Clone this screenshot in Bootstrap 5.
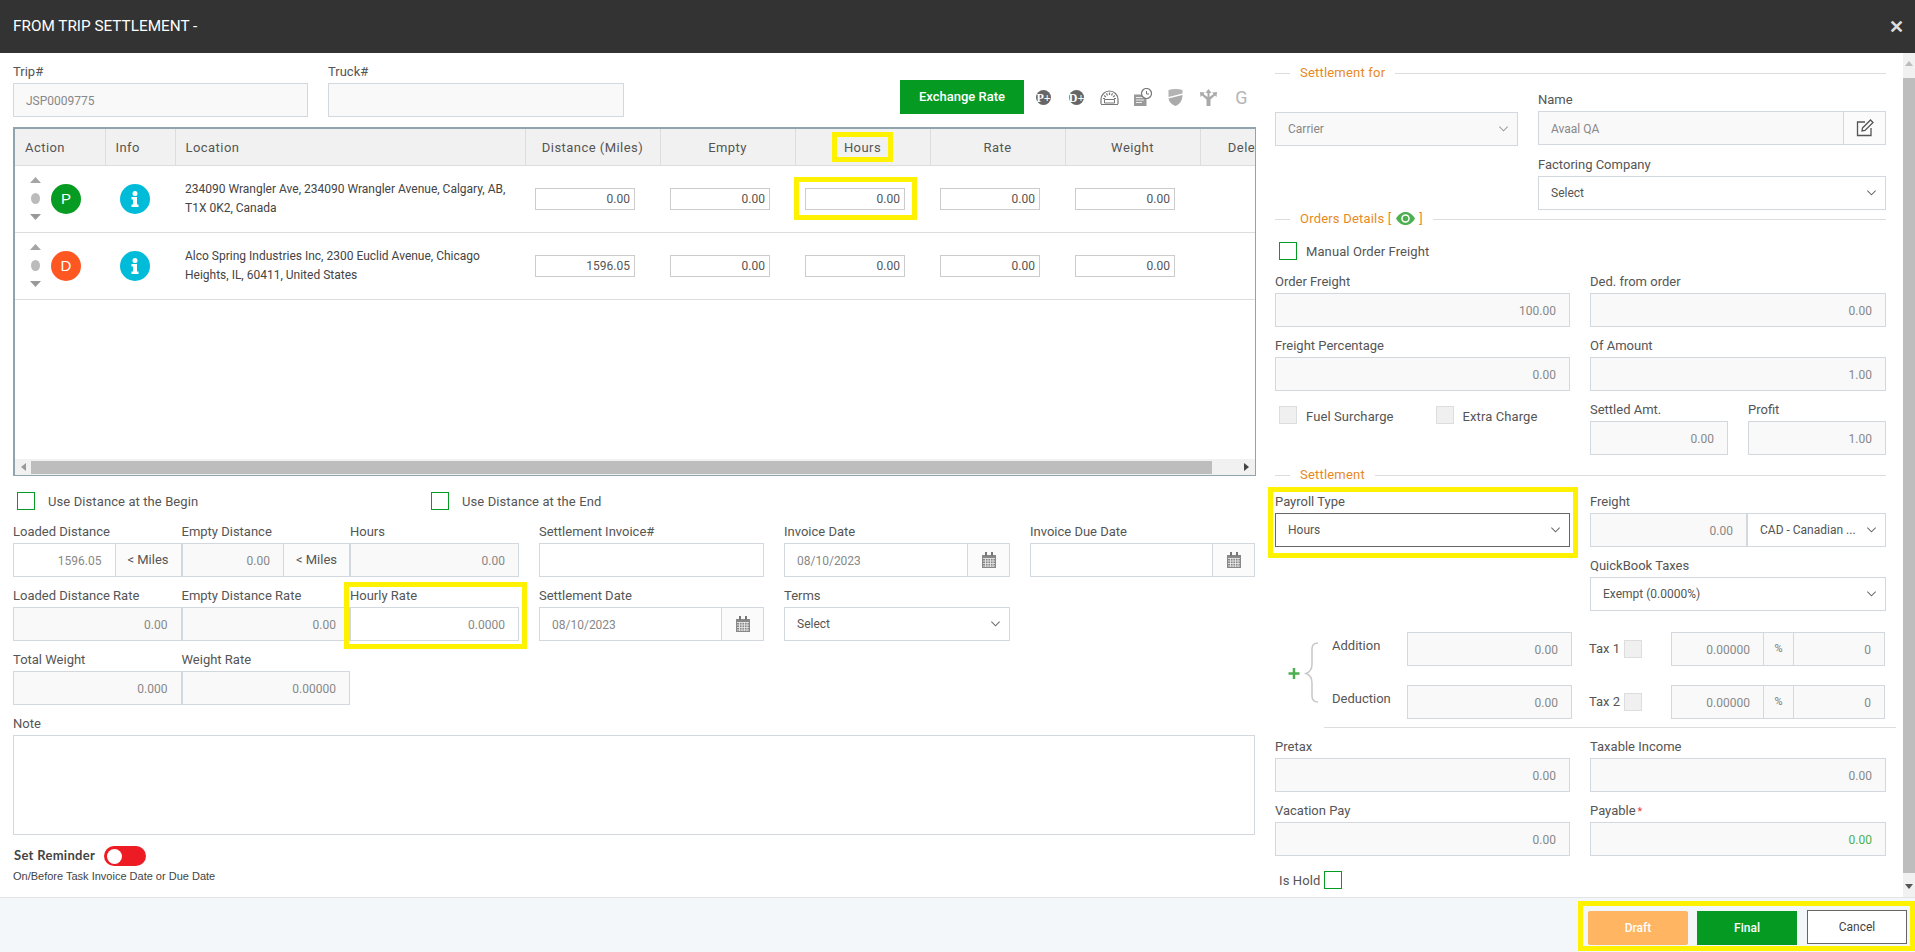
<!DOCTYPE html>
<html lang="en">
<head>
<meta charset="utf-8">
<title>From Trip Settlement</title>
<link href="https://cdn.jsdelivr.net/npm/bootstrap@5.3.0/dist/css/bootstrap.min.css" rel="stylesheet">
<style>
html,body{height:952px;overflow:hidden}
body{font-family:Roboto,"Liberation Sans",sans-serif;font-size:13px;color:#555;background:#fff}
.shell{height:952px}
.topbar{height:53px;background:#333;color:#fff;padding:0 13px;font-size:15.300px;flex:none}
.closex{font-size:18px;font-weight:700;color:#ddd;line-height:1;margin-right:-2px;font-family:"Liberation Sans",sans-serif}
.mainrow{height:844px;flex:none}
.leftpane{width:1262px;padding-left:13px;flex:none}
.rightpane{width:641px;padding-left:13px;flex:none}
.vscroll{width:12px;background:#f1f1f1;flex:none;align-items:center}
.vthumb{width:12px;height:795px;background:#bdbdbd}
.lbl{display:block;height:18px;line-height:20px;margin:0 0 3px;font-size:13px;color:#555;white-space:nowrap}
.form-control,.form-select,.input-group-text,.btn{border-radius:0!important}
.form-control,.form-select{height:34px;font-size:12px;padding:1px 13px 0 12px;border:1px solid #d3d7de;color:#555;box-shadow:none}
.form-control:disabled,.form-select:disabled{background-color:#f9f9f9;color:#888;opacity:1}
.form-select{background-image:url("data:image/svg+xml,%3csvg xmlns='http://www.w3.org/2000/svg' viewBox='0 0 12 8'%3e%3cpath fill='none' stroke='%23666' stroke-width='1.100' d='M1.500 1.500L6 6l4.500-4.500'/%3e%3c/svg%3e");background-size:11px 8px;background-position:right 8px center;padding:0 24px 0 12px}
.form-select:disabled{background-image:url("data:image/svg+xml,%3csvg xmlns='http://www.w3.org/2000/svg' viewBox='0 0 12 8'%3e%3cpath fill='none' stroke='%23999' stroke-width='1.100' d='M1.500 1.500L6 6l4.500-4.500'/%3e%3c/svg%3e")}
.form-control.ghost{color:#888}
.input-group-text{font-size:13px;padding:0;justify-content:center;background:#fbfbfb;border:1px solid #d3d7de;color:#555;height:34px}
.w295{width:295px;flex:none}.w296{width:296px;flex:none}
.trip-row{margin-top:9px;gap:20px;align-items:flex-end}
.exch{width:124px;height:34px;background:#059a22;color:#fff;font-size:13px;font-weight:500;padding:0;border:0;margin-bottom:3px;margin-left:256px;line-height:32px;flex:none}
.exch:hover{background:#059a22;color:#fff}
.toolicons{margin:0 0 3px -17px;height:34px;align-items:center;flex:none}
.toolicons svg{display:block;margin:0 7px}
.gridbox{margin-top:10px;width:1243px;height:349px;border:2px solid #90a4ae;border-width:2px 1px 1px 2px;background:#fff}
.gridclip{height:330px;overflow:hidden}
.grid-t{width:1280px;table-layout:fixed;border-collapse:collapse;margin:0}
.grid-t th{height:36px;background:#f1f1f1;font-weight:400;font-size:13px;letter-spacing:.45px;color:#555;border-right:1px solid #ddd;border-bottom:1px solid #ddd;padding:1px 10px 0;text-align:center;white-space:nowrap}
.grid-t th.tl{text-align:left}
.grid-t td{height:67px;border-bottom:1px solid #ddd;padding:0 10px;vertical-align:middle;font-size:12px;color:#444;line-height:19px}
.grid-t td.act{padding-left:15px}
.grid-t td.inf{padding-left:15px}
.cellwrap{width:100px}
.cellin{width:100px;height:22px;border:1px solid #ccc;font-size:12px;text-align:right;padding:1px 4px 0;color:#555;display:block;background:#fff;outline:0}
.movers{width:11px;height:43px;margin-right:10px;justify-content:space-between;align-items:center}
.stopdot{width:30px;height:30px;border-radius:50%;color:#fff;font-size:15px;line-height:30px;text-align:center;font-family:"Liberation Sans",sans-serif}
.stop-p{background:#069b22}.stop-d{background:#ff5722}
.hbar{height:16px;background:#f1f1f1;align-items:center;padding:0 6px}
.hthumb{width:1181px;height:13px;background:#bdbdbd;margin:0 auto 0 5px}
.flagrow{margin-top:16px;margin-left:4px;align-items:center;height:18px}
.flagcell{width:414px;gap:13px;align-items:center}
.tick{width:18px;height:18px;margin:0!important;border:1px solid #069b22;border-radius:0!important;background:#fff;flex:none}
.tick:disabled{background:#f0f0f0;border-color:#ddd;opacity:1}
.flaglabel{font-size:13px;line-height:20px;color:#555;letter-spacing:.1px;padding-top:1px}
.lgrid{display:grid;grid-template-columns:168.500px 168.500px 169px 245px 246px 245px;row-gap:9px;margin-top:12px;width:1242px}
.pl20{padding-left:20px}
.milesbox{flex:none;width:67px}
.cal{width:43px;flex:none}
.hl{position:relative}
.hl::after{content:"";position:absolute;border:5px solid #fff200;pointer-events:none}
.hl-rate::after{inset:-4px -8px -8px -6px}
.hl-pay::after{inset:-5px -8px -11px -7px}
.hl-hin::after{inset:-11px -12px -10px -11px}
.hl-hh{display:inline-block;padding:0}
.hl-hh::after{inset:-6px -12px -5px -12px}
.notefld{margin-top:9px;width:1242px}
.notefld textarea{height:100px;resize:none}
.remind{margin-top:11px;margin-left:1px;gap:9px;align-items:center;height:20px}
.remtext{font-family:Lato,sans-serif;font-weight:700;font-size:13px;color:#444;letter-spacing:.3px}
.tgl{width:42px;height:20px;border-radius:10px;background:#ed1c24;padding:0 3px;align-items:center}
.tgl span{display:block;width:15px;height:15px;border-radius:50%;background:#fff}
.remnote{font-family:"Liberation Sans",sans-serif;font-size:11px;line-height:15px;margin-top:3px;color:#444}
.sec{height:18px;gap:10px;align-items:center;color:#e8891e;font-size:13px;letter-spacing:.2px;width:611px;white-space:nowrap}
.sec::before{content:"";width:15px;border-top:1px solid #ddd;flex:none}
.sec::after{content:"";flex:1;border-top:1px solid #ddd}
.topsec{margin-top:11px}
.eyeic{margin:0 1px;vertical-align:-2px}
.two{display:grid;grid-template-columns:295px 296px;column-gap:20px;row-gap:9px;width:611px}
.namegrid{display:grid;grid-template-columns:243px 348px;column-gap:20px;width:611px}
.carrier{margin-top:30px}
.mt10px{margin-top:10px}
.manual{margin:14px 0 0 4px;gap:9px;align-items:center;height:18px}
.order-two{margin-top:12px}
.chkpair{padding:6px 0 0 4px;gap:9px;height:55px}
.fuelgap{margin-right:33px}
.settled{display:grid;grid-template-columns:138px 138px;column-gap:20px}
.freightin{width:157px!important;flex:none}
.paysel{border-color:#666}
.secset{margin-top:11px}
.pay-two{margin-top:8px}
.addwrap{margin-top:21px;width:612px}
.bracecol{width:57px;flex:none}
.adds{gap:19px}
.addrow{height:34px;align-items:center}
.addname{width:75px;height:34px;line-height:28px;color:#555}
.addin{width:165px!important;flex:none}
.taxname{width:35px;margin-left:17px;color:#555}
.taxbox{width:216px!important;margin-left:29px;flex:none}
.taxbox .pct{width:31px;flex:none;font-size:11px;color:#777;background:#f9f9f9}
.taxbox .amt{width:93px;flex:none}
.taxbox .qty{width:92px;flex:none}
.rule2{width:572px;margin:8px 0 9px 49px;border-top:1px solid #ddd}
.reqmark{color:#ed3b3b;font-size:11px;margin-left:2px}
.greenval{color:#4caf50!important}
.holdrow{margin:15px 0 0 4px;gap:4px;align-items:center;height:18px}
.footbar{height:55px;background:#f4f7fa;border-top:1px solid #e2e5e8;padding-top:3px;flex:none}
.footyellow{width:337px;height:50px;border:5px solid #fff200;padding:5px 3px 0 5px;gap:9px;margin-left:auto}
.fbtn{width:100px;height:34px;padding:0;font-size:12px;font-weight:500;border:0;line-height:34px}
.fbtn-draft,.fbtn-draft:hover{background:#ffb562;color:#fff;border-radius:2px!important}
.fbtn-final,.fbtn-final:hover{background:#059a22;color:#fff}
.fbtn-cancel,.fbtn-cancel:hover{background:#fff;color:#444;border:1px solid #666;margin:-1px 0 0 1px;font-weight:400;line-height:28px}
</style>
</head>
<body>
<div class="shell d-flex flex-column">
  <div class="topbar d-flex align-items-center justify-content-between">
    <span>FROM TRIP SETTLEMENT -</span>
    <span class="closex">✕</span>
  </div>

  <div class="mainrow d-flex">
    <div class="leftpane">
      <div class="d-flex trip-row">
        <div class="w295"><label class="lbl">Trip#</label><input class="form-control" disabled value="JSP0009775"></div>
        <div class="w296"><label class="lbl">Truck#</label><input class="form-control" disabled></div>
        <button class="btn exch">Exchange Rate</button>
        <div class="d-flex toolicons">
          <svg width="19" height="19" viewBox="0 0 19 19"><circle cx="9.500" cy="9.500" r="7.500" fill="#666"/><text x="9.500" y="13.500" text-anchor="middle" font-size="12" font-weight="700" fill="#fff" font-family="Liberation Serif">P+</text></svg>
          <svg width="19" height="19" viewBox="0 0 19 19"><circle cx="9.500" cy="9.500" r="7.500" fill="#666"/><text x="9.500" y="13.500" text-anchor="middle" font-size="12" font-weight="700" fill="#fff" font-family="Liberation Serif">D+</text></svg>
          <svg width="19" height="19" viewBox="0 0 19 19" fill="none" stroke="#777"><path d="M1 16v-4.500a8.500 8.500 0 0 1 17 0V16" stroke-width="1.200"/><path d="M1 16.500h17" stroke-width="1"/><path d="M4.500 11.500h10v3.500h-10z" fill="#fff" stroke-width="1"/><path d="M9.500 4.500v2.500M6.500 5.300l1 2.200M12.500 5.300l-1 2.200M4.200 7.500l1.700 1.500M14.800 7.500l-1.700 1.500M3 10.500h2M14 10.500h2" stroke-width="1.200"/></svg>
          <svg width="19" height="19" viewBox="0 0 19 19"><path d="M1 6.500h12.500V18H1z" fill="#999"/><path d="M3 9.500h8M3 12h8M3 14.500h6" stroke="#eee"/><circle cx="13.500" cy="5.500" r="5" fill="#fff" stroke="#777" stroke-width="1.200"/><path d="M13.500 3v3h2.500" fill="none" stroke="#777"/></svg>
          <svg width="19" height="19" viewBox="0 0 19 19"><path d="M2.500 2c4.500-1.300 9.500-1.300 14 0v3.500L2.500 9z" fill="#b3b3b3"/><path d="M2.500 10.500L16.500 7c0 5-2.500 9-7 11-3.800-1.500-6.500-4-7-7.500z" fill="#aaa"/></svg>
          <svg width="19" height="19" viewBox="0 0 19 19" fill="#aaa"><path d="M9.500 1l3 4h-2v4l4-3-1.300-1.600L18 4l-.5 5-1.500-1.500-4.500 4V18h-4v-6.500L3 7.500 1.500 9 1 4l4.800.4L4.500 6l4 3V5h-2z"/></svg>
          <svg width="19" height="19" viewBox="0 0 19 19"><text x="9.500" y="16" text-anchor="middle" font-size="18" fill="#b5b5b5" font-family="Roboto">G</text></svg>
        </div>
      </div>

      <div class="gridbox">
        <div class="gridclip">
          <table class="grid-t">
            <colgroup><col style="width:90px"><col style="width:70px"><col style="width:350px"><col style="width:135px"><col style="width:135px"><col style="width:135px"><col style="width:135px"><col style="width:135px"><col style="width:95px"></colgroup>
            <thead>
              <tr>
                <th class="tl">Action</th><th class="tl">Info</th><th class="tl">Location</th><th>Distance (Miles)</th><th>Empty</th>
                <th><span class="hl hl-hh">Hours</span></th><th>Rate</th><th>Weight</th><th>Delete</th>
              </tr>
            </thead>
            <tbody>
              <tr>
                <td class="act"><div class="d-flex align-items-center">
                  <div class="movers d-flex flex-column"><svg width="11" height="6" viewBox="0 0 11 6"><path d="M5.500 0L11 6H0z" fill="#a5a5a5"/></svg><svg width="9" height="11" viewBox="0 0 9 11"><ellipse cx="4.500" cy="5.500" rx="4.500" ry="5.500" fill="#bbb"/></svg><svg width="11" height="6" viewBox="0 0 11 6"><path d="M0 0h11L5.500 6z" fill="#999"/></svg></div>
                  <div class="stopdot stop-p">P</div></div></td>
                <td class="inf"><svg width="30" height="30" viewBox="0 0 30 30"><circle cx="15" cy="15" r="15" fill="#00bcd9"/><circle cx="15" cy="9.500" r="2.500" fill="#fff"/><path d="M11.500 13h5.500v7.500h1.500V23h-7v-2.500H13v-5h-1.500z" fill="#fff"/></svg></td>
                <td>234090 Wrangler Ave, 234090 Wrangler Avenue, Calgary, AB,<br>T1X 0K2, Canada</td>
                <td><input class="cellin" value="0.00"></td>
                <td><input class="cellin" value="0.00"></td>
                <td><div class="hl hl-hin cellwrap"><input class="cellin" value="0.00"></div></td>
                <td><input class="cellin" value="0.00"></td>
                <td><input class="cellin" value="0.00"></td>
                <td></td>
              </tr>
              <tr>
                <td class="act"><div class="d-flex align-items-center">
                  <div class="movers d-flex flex-column"><svg width="11" height="6" viewBox="0 0 11 6"><path d="M5.500 0L11 6H0z" fill="#a5a5a5"/></svg><svg width="9" height="11" viewBox="0 0 9 11"><ellipse cx="4.500" cy="5.500" rx="4.500" ry="5.500" fill="#bbb"/></svg><svg width="11" height="6" viewBox="0 0 11 6"><path d="M0 0h11L5.500 6z" fill="#999"/></svg></div>
                  <div class="stopdot stop-d">D</div></div></td>
                <td class="inf"><svg width="30" height="30" viewBox="0 0 30 30"><circle cx="15" cy="15" r="15" fill="#00bcd9"/><circle cx="15" cy="9.500" r="2.500" fill="#fff"/><path d="M11.500 13h5.500v7.500h1.500V23h-7v-2.500H13v-5h-1.500z" fill="#fff"/></svg></td>
                <td>Alco Spring Industries Inc, 2300 Euclid Avenue, Chicago<br>Heights, IL, 60411, United States</td>
                <td><input class="cellin" value="1596.05"></td>
                <td><input class="cellin" value="0.00"></td>
                <td><input class="cellin" value="0.00"></td>
                <td><input class="cellin" value="0.00"></td>
                <td><input class="cellin" value="0.00"></td>
                <td></td>
              </tr>
            </tbody>
          </table>
        </div>
        <div class="hbar d-flex">
          <svg width="5" height="8" viewBox="0 0 5 8"><path d="M5 0v8L0 4z" fill="#999"/></svg>
          <div class="hthumb"></div>
          <svg width="5" height="8" viewBox="0 0 5 8"><path d="M0 0v8l5-4z" fill="#444"/></svg>
        </div>
      </div>

      <div class="d-flex flagrow">
        <div class="d-flex flagcell"><input type="checkbox" class="form-check-input tick"><span class="flaglabel">Use Distance at the Begin</span></div>
        <div class="d-flex flagcell"><input type="checkbox" class="form-check-input tick"><span class="flaglabel">Use Distance at the End</span></div>
      </div>

      <div class="lgrid">
        <div><label class="lbl">Loaded Distance</label><div class="input-group flex-nowrap"><input class="form-control text-end ghost" value="1596.05"><span class="input-group-text milesbox">&lt; Miles</span></div></div>
        <div><label class="lbl">Empty Distance</label><div class="input-group flex-nowrap"><input class="form-control text-end" disabled value="0.00"><span class="input-group-text milesbox">&lt; Miles</span></div></div>
        <div><label class="lbl">Hours</label><input class="form-control text-end" disabled value="0.00"></div>
        <div class="pl20"><label class="lbl">Settlement Invoice#</label><input class="form-control"></div>
        <div class="pl20"><label class="lbl">Invoice Date</label><div class="input-group flex-nowrap"><input class="form-control ghost" value="08/10/2023"><span class="input-group-text cal"><svg width="14" height="16" viewBox="0 0 14 16"><path d="M0 3h14v13H0z" fill="#888"/><path d="M3 0h2v4H3zM9 0h2v4H9z" fill="#777"/><path d="M1 6.500h12M1 9h12M1 11.500h12M1 14h12M3.500 6v9M6 6v9M8.500 6v9M11 6v9" stroke="#eee" stroke-width=".8"/></svg></span></div></div>
        <div class="pl20"><label class="lbl">Invoice Due Date</label><div class="input-group flex-nowrap"><input class="form-control"><span class="input-group-text cal"><svg width="14" height="16" viewBox="0 0 14 16"><path d="M0 3h14v13H0z" fill="#888"/><path d="M3 0h2v4H3zM9 0h2v4H9z" fill="#777"/><path d="M1 6.500h12M1 9h12M1 11.500h12M1 14h12M3.500 6v9M6 6v9M8.500 6v9M11 6v9" stroke="#eee" stroke-width=".8"/></svg></span></div></div>

        <div><label class="lbl">Loaded Distance Rate</label><input class="form-control text-end" disabled value="0.00"></div>
        <div><label class="lbl">Empty Distance Rate</label><input class="form-control text-end" disabled value="0.00"></div>
        <div class="hl hl-rate"><label class="lbl">Hourly Rate</label><input class="form-control text-end ghost" value="0.0000"></div>
        <div class="pl20"><label class="lbl">Settlement Date</label><div class="input-group flex-nowrap"><input class="form-control ghost" value="08/10/2023"><span class="input-group-text cal"><svg width="14" height="16" viewBox="0 0 14 16"><path d="M0 3h14v13H0z" fill="#888"/><path d="M3 0h2v4H3zM9 0h2v4H9z" fill="#777"/><path d="M1 6.500h12M1 9h12M1 11.500h12M1 14h12M3.500 6v9M6 6v9M8.500 6v9M11 6v9" stroke="#eee" stroke-width=".8"/></svg></span></div></div>
        <div class="pl20"><label class="lbl">Terms</label><select class="form-select"><option>Select</option></select></div>
        <div></div>

        <div><label class="lbl">Total Weight</label><input class="form-control text-end" disabled value="0.000"></div>
        <div><label class="lbl">Weight Rate</label><input class="form-control text-end" disabled value="0.00000"></div>
      </div>

      <div class="notefld"><label class="lbl">Note</label><textarea class="form-control"></textarea></div>

      <div class="d-flex remind"><span class="remtext">Set Reminder</span><div class="tgl d-flex"><span></span></div></div>
      <div class="remnote">On/Before Task Invoice Date or Due Date</div>
    </div>

    <div class="rightpane">
      <div class="d-flex sec topsec"><span>Settlement for</span></div>
      <div class="namegrid">
        <div class="carrier"><select class="form-select" disabled><option>Carrier</option></select></div>
        <div class="mt-2"><label class="lbl">Name</label>
          <div class="input-group flex-nowrap"><input class="form-control" disabled value="Avaal QA"><span class="input-group-text cal"><svg width="18" height="18" viewBox="0 0 18 18" fill="none" stroke="#555" stroke-width="1.300"><path d="M9 3H1.500v13.500H15V9"/><path d="M6.500 9L14.500 1l2.500 2.500-8 8-3 .5z"/></svg></span></div>
          <label class="lbl mt10px">Factoring Company</label>
          <select class="form-select"><option>Select</option></select>
        </div>
      </div>

      <div class="d-flex sec"><span>Orders Details [ <svg class="eyeic" width="19" height="13" viewBox="0 0 19 13"><path d="M0 6.500C3 1.500 6.500 0 9.500 0s6.500 1.500 9.500 6.500C16 11.500 12.500 13 9.500 13S3 11.500 0 6.500z" fill="#4caf50"/><circle cx="9.500" cy="6.500" r="4.300" fill="#fff"/><circle cx="9.500" cy="6.500" r="2.800" fill="#4caf50"/></svg> ]</span></div>

      <div class="d-flex manual"><input type="checkbox" class="form-check-input tick"><span class="flaglabel">Manual Order Freight</span></div>

      <div class="two order-two">
        <div><label class="lbl">Order Freight</label><input class="form-control text-end" disabled value="100.00"></div>
        <div><label class="lbl">Ded. from order</label><input class="form-control text-end" disabled value="0.00"></div>
        <div><label class="lbl">Freight Percentage</label><input class="form-control text-end" disabled value="0.00"></div>
        <div><label class="lbl">Of Amount</label><input class="form-control text-end" disabled value="1.00"></div>
        <div class="d-flex chkpair">
          <input type="checkbox" class="form-check-input tick" disabled><span class="flaglabel fuelgap">Fuel Surcharge</span>
          <input type="checkbox" class="form-check-input tick" disabled><span class="flaglabel">Extra Charge</span>
        </div>
        <div class="settled">
          <div><label class="lbl">Settled Amt.</label><input class="form-control text-end" disabled value="0.00"></div>
          <div><label class="lbl">Profit</label><input class="form-control text-end" disabled value="1.00"></div>
        </div>
      </div>

      <div class="d-flex sec secset"><span>Settlement</span></div>

      <div class="two pay-two">
        <div class="hl hl-pay"><label class="lbl">Payroll Type</label><select class="form-select paysel"><option>Hours</option></select></div>
        <div><label class="lbl">Freight</label><div class="d-flex"><input class="form-control text-end freightin" disabled value="0.00"><select class="form-select"><option>CAD - Canadian ...</option></select></div></div>
        <div></div>
        <div><label class="lbl">QuickBook Taxes</label><select class="form-select"><option>Exempt (0.0000%)</option></select></div>
      </div>

      <div class="d-flex addwrap">
        <div class="d-flex bracecol">
          <svg width="50" height="87" viewBox="0 0 50 87" fill="none"><path d="M19 36v11M13.500 41.500h11" stroke="#4caf50" stroke-width="2.500"/><path d="M43 11c-4 0-6 2-6 6v15c0 5-2 8-6 9.500 4 1.500 6 4.500 6 9.500v13c0 4 2 6 6 6" stroke="#c8c8c8" stroke-width="1.500"/></svg>
        </div>
        <div class="d-flex flex-column adds">
          <div class="d-flex addrow"><span class="addname">Addition</span><input class="form-control text-end addin" disabled value="0.00"><span class="taxname">Tax 1</span><input type="checkbox" class="form-check-input tick" disabled>
            <div class="input-group flex-nowrap taxbox"><input class="form-control text-end amt" disabled value="0.00000"><span class="input-group-text pct">%</span><input class="form-control text-end qty" disabled value="0"></div></div>
          <div class="d-flex addrow"><span class="addname">Deduction</span><input class="form-control text-end addin" disabled value="0.00"><span class="taxname">Tax 2</span><input type="checkbox" class="form-check-input tick" disabled>
            <div class="input-group flex-nowrap taxbox"><input class="form-control text-end amt" disabled value="0.00000"><span class="input-group-text pct">%</span><input class="form-control text-end qty" disabled value="0"></div></div>
        </div>
      </div>
      <div class="rule2"></div>

      <div class="two">
        <div><label class="lbl">Pretax</label><input class="form-control text-end" disabled value="0.00"></div>
        <div><label class="lbl">Taxable Income</label><input class="form-control text-end" disabled value="0.00"></div>
        <div><label class="lbl">Vacation Pay</label><input class="form-control text-end" disabled value="0.00"></div>
        <div><label class="lbl">Payable<span class="reqmark">*</span></label><input class="form-control text-end greenval" disabled value="0.00"></div>
      </div>

      <div class="d-flex holdrow"><span class="flaglabel">Is Hold</span><input type="checkbox" class="form-check-input tick"></div>
    </div>

    <div class="vscroll d-flex flex-column">
      <svg class="my-2" width="8" height="5" viewBox="0 0 8 5"><path d="M4 0l4 5H0z" fill="#bbb"/></svg>
      <div class="vthumb mt-1"></div>
      <svg class="mt-auto mb-2" width="8" height="5" viewBox="0 0 8 5"><path d="M0 0h8L4 5z" fill="#555"/></svg>
    </div>
  </div>

  <div class="footbar d-flex">
    <div class="footyellow d-flex">
      <button class="btn fbtn fbtn-draft">Draft</button>
      <button class="btn fbtn fbtn-final">Final</button>
      <button class="btn fbtn fbtn-cancel">Cancel</button>
    </div>
  </div>
</div>
<script src="https://cdn.jsdelivr.net/npm/bootstrap@5.3.0/dist/js/bootstrap.bundle.min.js"></script>
</body>
</html>
